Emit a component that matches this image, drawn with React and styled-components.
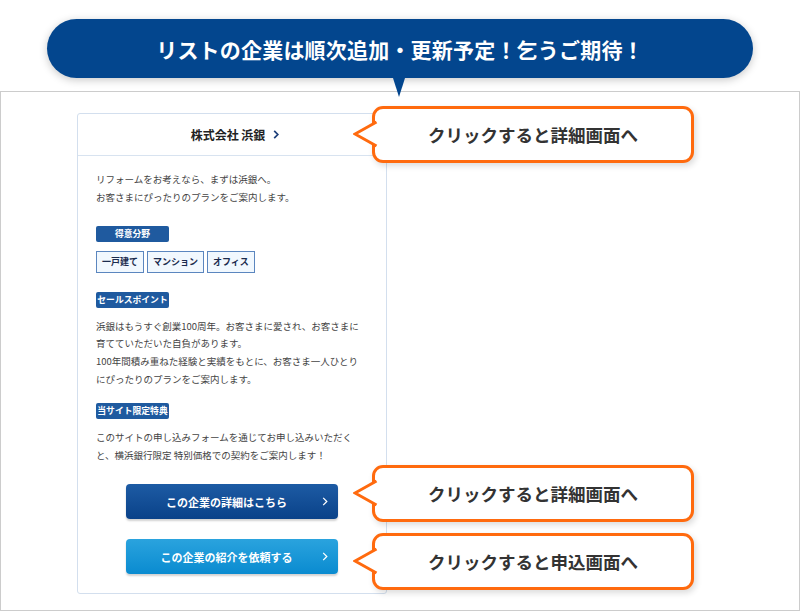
import styled, { createGlobalStyle } from 'styled-components';

const GlobalStyle = createGlobalStyle`
  html, body {
    margin: 0;
    padding: 0;
    background: #ffffff;
  }
  body {
    font-family: "Noto Sans CJK JP", "Noto Sans", sans-serif;
    color: #444444;
  }
`;

const Page = styled.div`
  width: 800px;
  height: 611px;
  padding-top: 19px;
  box-sizing: border-box;
  overflow: hidden;
`;

const Banner = styled.div`
  position: relative;
  z-index: 2;
  width: 706px;
  height: 59px;
  margin: 0 0 0 47px;
  border-radius: 30px;
  background: #03468e;
  box-shadow: 0 2px 9px rgba(0, 0, 0, 0.22);
  display: flex;
  align-items: center;
  justify-content: center;
  color: #ffffff;
  font-size: 21px;
  font-weight: 700;
  letter-spacing: 0.2px;

  &::after {
    content: '';
    position: absolute;
    left: 346px;
    bottom: -19px;
    border-top: 19px solid #03468e;
    border-left: 6px solid transparent;
    border-right: 6px solid transparent;
  }
`;

const Frame = styled.div`
  position: relative;
  margin-top: 13px;
  height: 520px;
  box-sizing: border-box;
  border: 1px solid #cccccc;
  padding: 21px 0 0 76px;
`;

const Card = styled.div`
  width: 310px;
  box-sizing: border-box;
  border: 1px solid #d3dfee;
  border-radius: 3px;
  background: #ffffff;
`;

const CardHeader = styled.div`
  height: 41px;
  border-bottom: 1px solid #d8e3f0;
  display: flex;
  align-items: center;
  justify-content: center;
  gap: 8px;
  padding-left: 6px;
  font-size: 12px;
  font-weight: 700;
  color: #222222;
`;

const CardBody = styled.div`
  padding: 15px 19px 19px 18px;
  display: flex;
  flex-direction: column;
`;

const Text = styled.p`
  margin: 0;
  font-size: 9.5px;
  line-height: 17.8px;
  color: #444444;
  white-space: nowrap;
`;

const Label = styled.div`
  width: 73px;
  height: 16px;
  margin-top: ${(p) => p.$top}px;
  border-radius: 2px;
  background: #1f5a9f;
  color: #ffffff;
  font-size: 8.8px;
  font-weight: 700;
  display: flex;
  align-items: center;
  justify-content: center;
`;

const Tags = styled.div`
  display: flex;
  gap: 3px;
  margin-top: 9px;
`;

const Tag = styled.div`
  height: 22px;
  box-sizing: border-box;
  padding: 0 5px;
  border: 1px solid #5b86bf;
  background: #f1f8fe;
  color: #1b2c4e;
  font-size: 9px;
  font-weight: 700;
  display: flex;
  align-items: center;
`;

const Spaced = styled.div`
  margin-top: ${(p) => p.$top}px;
`;

const Buttons = styled.div`
  display: flex;
  flex-direction: column;
  align-items: center;
  gap: 20px;
  margin-top: 20px;
`;

const Button = styled.div`
  position: relative;
  width: 212px;
  height: 35px;
  box-sizing: border-box;
  border-radius: 4px;
  background: ${(p) =>
    p.$light
      ? 'linear-gradient(#2aa3de, #0a8bd0)'
      : 'linear-gradient(#1d5ba4, #0a4289)'};
  box-shadow: 0 2px 2px rgba(0, 0, 0, 0.18);
  color: #ffffff;
  font-size: 11px;
  font-weight: 700;
  display: flex;
  align-items: center;
  justify-content: center;
  padding-right: 10px;

  svg {
    position: absolute;
    right: 10px;
    top: 13px;
  }
`;

const Callout = styled.div`
  position: absolute;
  left: 371px;
  top: ${(p) => p.$top}px;
  width: 322px;
  height: 57px;
  box-sizing: border-box;
  border: 3px solid #ff6a0e;
  border-radius: 11px;
  background: #ffffff;
  box-shadow: 2px 3px 6px rgba(0, 0, 0, 0.14);
  display: flex;
  align-items: center;
  justify-content: center;
  font-size: 17.5px;
  font-weight: 700;
  color: #333333;

  svg {
    position: absolute;
    left: -22px;
    top: 10px;
  }
`;

function Chevron({ color, width = 6, height = 9, stroke = 1.4 }) {
  return (
    <svg width={ width } height={ height } viewBox="0 0 6 10">
      <polyline points="1,1 5,5 1,9" fill="none" stroke={ color } strokeWidth={ stroke } strokeLinejoin="miter" />
    </svg>
  );
}

function Tail() {
  return (
    <svg width="26" height="30" viewBox="0 0 26 30">
      <polygon points="25,2 2,15 25,28" fill="#ffffff" />
      <polyline points="23.5,3 2,15 23.5,27" fill="none" stroke="#ff6a0e" strokeWidth="3" strokeLinejoin="miter" />
    </svg>
  );
}

const callouts = [
  { top: 14, text: 'クリックすると詳細画面へ' },
  { top: 373, text: 'クリックすると詳細画面へ' },
  { top: 441, text: 'クリックすると申込画面へ' },
];

export default function App() {
  return (
    <Page>
      <GlobalStyle />
      <Banner>リストの企業は順次追加・更新予定！乞うご期待！</Banner>
      <Frame>
        <Card>
          <CardHeader>
            <span>株式会社 浜銀</span>
            <Chevron color="#1d3f7a" width={ 6 } height={ 9 } stroke={ 1.9 } />
          </CardHeader>
          <CardBody>
            <Text>
              リフォームをお考えなら、まずは浜銀へ。<br />
              お客さまにぴったりのプランをご案内します。
            </Text>

            <Label $top={ 19 }>得意分野</Label>
            <Tags>
              <Tag>一戸建て</Tag>
              <Tag>マンション</Tag>
              <Tag>オフィス</Tag>
            </Tags>

            <Label $top={ 19 }>セールスポイント</Label>
            <Spaced $top={ 10 }>
              <Text>
                浜銀はもうすぐ創業100周年。お客さまに愛され、お客さまに<br />
                育てていただいた自負があります。<br />
                100年間積み重ねた経験と実績をもとに、お客さま一人ひとり<br />
                にぴったりのプランをご案内します。
              </Text>
            </Spaced>

            <Label $top={ 14 }>当サイト限定特典</Label>
            <Spaced $top={ 10 }>
              <Text>
                このサイトの申し込みフォームを通じてお申し込みいただく<br />
                と、横浜銀行限定 特別価格での契約をご案内します！
              </Text>
            </Spaced>

            <Buttons>
              <Button>
                この企業の詳細はこちら
                <Chevron color="#ffffff" />
              </Button>
              <Button $light>
                この企業の紹介を依頼する
                <Chevron color="#ffffff" />
              </Button>
            </Buttons>
          </CardBody>
        </Card>

        { callouts.map(({ top, text }) => (
          <Callout key={ top } $top={ top }>
            <Tail />
            { text }
          </Callout>
        )) }
      </Frame>
    </Page>
  );
}
